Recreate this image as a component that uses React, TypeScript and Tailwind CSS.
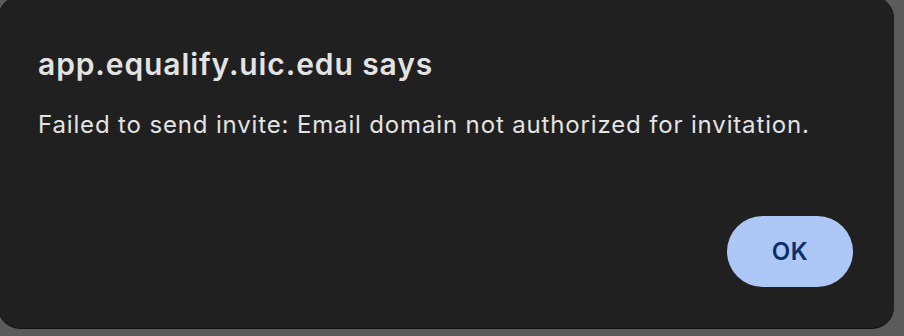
import React from 'react';

const App: React.FC = () => {
  return (
    <div className="w-[904px] h-[336px] bg-[#5b5b5b] overflow-hidden relative">
      <div
        className="-ml-[2px] -mt-[4px] w-[896px] h-[332px] rounded-[22px] bg-[#202020] shadow-[0_1px_0_#111] flex flex-col pl-[40px] pr-[41px] pt-[50px] pb-[41px]"
        style={{ fontFamily: 'Inter, "Noto Sans", sans-serif' }}
      >
        <h1 className="text-[30px] font-semibold leading-[36px] tracking-[0.9px] text-[#e3e3e3]">
          app.equalify.uic.edu says
        </h1>
        <p className="mt-[28px] text-[24px] leading-[29px] tracking-[0.85px] text-[#e3e3e3]">
          Failed to send invite: Email domain not authorized for invitation.
        </p>
        <div className="mt-auto flex justify-end">
          <button className="w-[126px] h-[71px] rounded-full bg-[#adc8f6] text-[#0b2e6b] text-[24px] font-semibold tracking-[0.5px]">
            OK
          </button>
        </div>
      </div>
    </div>
  );
};

export default App;
